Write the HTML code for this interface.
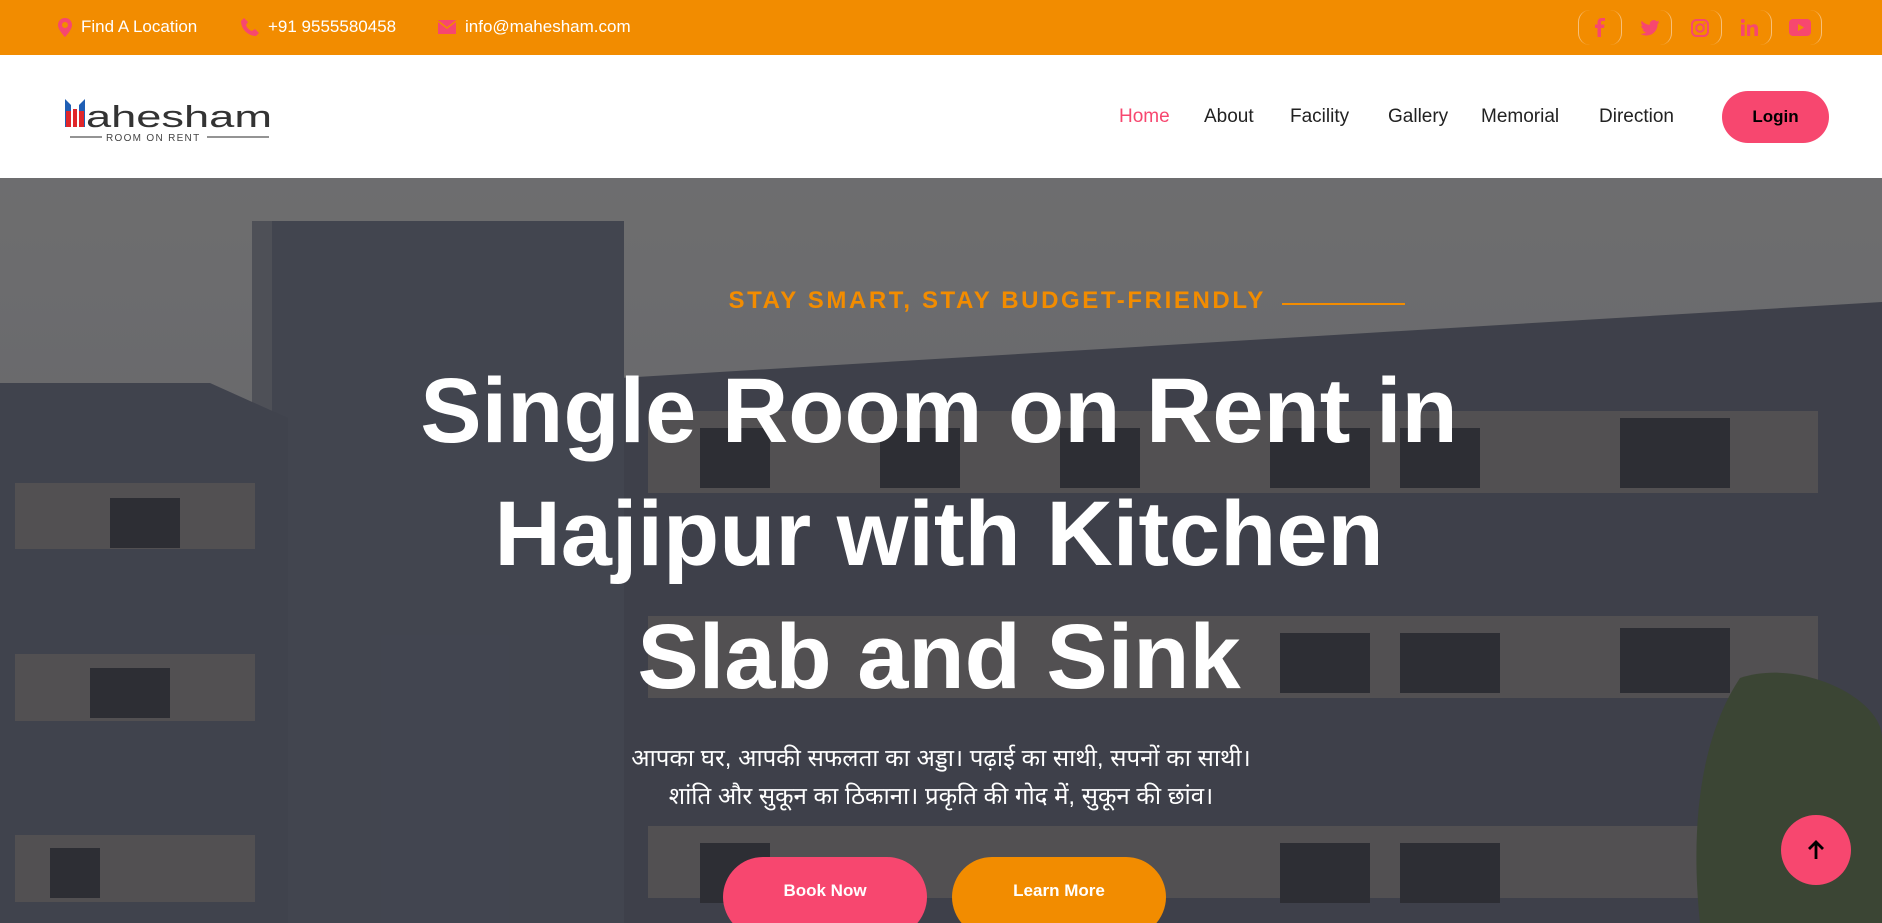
<!DOCTYPE html>
<html><head><meta charset="utf-8">
<style>
*{margin:0;padding:0;box-sizing:border-box}
html,body{width:1882px;height:923px;overflow:hidden}
body{font-family:"Liberation Sans",sans-serif;background:#fff}
#w{position:relative;width:1882px;height:923px;overflow:hidden}
.top{position:absolute;left:0;top:0;width:1882px;height:55px;background:#F28C00;color:#fff;font-size:17px}
.top .it{position:absolute;top:17px;display:flex;align-items:center;gap:9px}
.soc{position:absolute;top:10px;height:35px;width:44px;border-left:1px solid #f7c07a;border-right:1px solid #f7c07a;border-radius:12px;display:flex;align-items:center;justify-content:center}
.nav{position:absolute;left:0;top:55px;width:1882px;height:123px;background:#fff}
.nav a{position:absolute;top:51px;font-size:19px;color:#222;text-decoration:none}
.login{position:absolute;left:1722px;top:36px;width:107px;height:52px;border-radius:26px;background:#F7476F;color:#000;font-weight:bold;font-size:17px;display:flex;align-items:center;justify-content:center}
.hero{position:absolute;left:0;top:178px;width:1882px;height:745px;overflow:hidden}
.c{position:absolute;left:0;width:1882px;text-align:center;color:#fff}
.btn{position:absolute;top:857px;height:80px;border-radius:40px;color:#fff;font-weight:bold;font-size:17px;display:flex;align-items:center;justify-content:center;padding-bottom:12px}
</style></head><body><div id="w">
<div class="top">
 <div class="it" style="left:58px"><svg width="14" height="19" viewBox="0 0 14 19"><path d="M7 0C3 0 0 3 0 7c0 5 7 12 7 12s7-7 7-12c0-4-3-7-7-7zm0 10a3 3 0 110-6 3 3 0 010 6z" fill="#F7476F"/></svg>Find A Location</div>
 <div class="it" style="left:241px"><svg width="18" height="18" viewBox="0 0 18 18"><path d="M3 0l4 4-2 3c1 3 3 5 6 6l3-2 4 4-3 3C7 18 0 11 0 3z" fill="#F7476F"/></svg>+91 9555580458</div>
 <div class="it" style="left:438px"><svg width="18" height="14" viewBox="0 0 18 14"><rect width="18" height="14" fill="#F7476F"/><path d="M0 1l9 7 9-7" stroke="#F28C00" stroke-width="1.5" fill="none"/></svg>info@mahesham.com</div>
 <div class="soc" style="left:1578px"><svg width="10" height="19" viewBox="0 0 10 19"><path d="M6 19V10h3l.5-3.5H6V4.5C6 3.5 6.3 3 7.5 3H10V0H7C4 0 2.5 1.7 2.5 4.5V6.5H0V10h2.5v9z" fill="#F7476F"/></svg></div>
 <div class="soc" style="left:1628px;border-left:none"><svg width="20" height="16" viewBox="0 0 24 20"><path d="M24 2.4c-.9.4-1.8.6-2.8.8 1-.6 1.8-1.6 2.2-2.7-1 .6-2 1-3.1 1.2A4.9 4.9 0 0011.900 6C7.8 5.8 4.2 3.9 1.7.9c-1.4 2.3-.5 5.1 1.5 6.5-.8 0-1.6-.2-2.2-.6 0 2.4 1.7 4.4 3.9 4.9-.7.2-1.5.2-2.2.1.6 2 2.4 3.4 4.6 3.4A9.9 9.9 0 010 17.3 14 14 0 0021.5 4.9c1-.7 1.8-1.5 2.5-2.5z" fill="#F7476F"/></svg></div>
 <div class="soc" style="left:1678px;border-left:none"><svg width="18" height="18" viewBox="0 0 18 18"><rect x="1" y="1" width="16" height="16" rx="4.5" stroke="#F7476F" stroke-width="2" fill="none"/><circle cx="9" cy="9" r="3.8" stroke="#F7476F" stroke-width="2" fill="none"/><circle cx="13.5" cy="4.5" r="1" fill="#F7476F"/></svg></div>
 <div class="soc" style="left:1728px;border-left:none"><svg width="17" height="17" viewBox="0 0 17 17"><rect x="0" y="5.5" width="3.6" height="11.5" fill="#F7476F"/><circle cx="1.8" cy="2" r="2" fill="#F7476F"/><path d="M6 5.5h3.4v1.6c.6-1 1.9-1.9 3.7-1.9 3.3 0 3.900 2.2 3.900 5v6.8h-3.6v-6c0-1.4-.1-3-2-3s-2.2 1.4-2.2 2.9V17H6z" fill="#F7476F"/></svg></div>
 <div class="soc" style="left:1778px;border-left:none"><svg width="22" height="17" viewBox="0 0 22 17"><rect width="22" height="17" rx="4" fill="#F7476F"/><path d="M9 5v7l6-3.5z" fill="#F28C00"/></svg></div>
</div>
<div class="nav">
 <svg style="position:absolute;left:64px;top:36px" width="212" height="52" viewBox="0 0 212 52">
  <path d="M1 8l6 6v22H1z" fill="#1f5fb5"/><path d="M21 8l-6 6v22h6z" fill="#1f5fb5"/>
  <rect x="2" y="20" width="5" height="16" fill="#e0262a"/><rect x="9" y="18" width="4" height="18" fill="#e0262a"/><rect x="15" y="20" width="5" height="16" fill="#e0262a"/>
  <text x="22" y="36" font-family="Liberation Sans,sans-serif" font-size="31" fill="#333" textLength="186" lengthAdjust="spacingAndGlyphs">ahesham</text>
  <line x1="6" y1="46" x2="38" y2="46" stroke="#555" stroke-width="1.3"/>
  <text x="42" y="50" font-family="Liberation Sans,sans-serif" font-size="10" fill="#444" letter-spacing="1.3">ROOM ON RENT</text>
  <line x1="143" y1="46" x2="205" y2="46" stroke="#555" stroke-width="1.3"/>
 </svg>
 <a style="left:1119px;color:#F7476F">Home</a>
 <a style="left:1204px">About</a>
 <a style="left:1290px">Facility</a>
 <a style="left:1388px">Gallery</a>
 <a style="left:1481px">Memorial</a>
 <a style="left:1599px">Direction</a>
 <div class="login">Login</div>
</div>
<div class="hero">
 <svg width="1882" height="745" viewBox="0 0 1882 745" style="position:absolute;left:0;top:0">
  <defs><linearGradient id="sky" x1="0" y1="0" x2="0" y2="1"><stop offset="0" stop-color="#7a7a7b"/><stop offset="1" stop-color="#6a6b6e"/></linearGradient></defs>
  <rect width="1882" height="745" fill="url(#sky)"/>
  <path d="M620 200 L1882 124 L1882 745 L620 745z" fill="#42454f"/>
  <rect x="252" y="43" width="372" height="702" fill="#474a55"/>
  <rect x="252" y="43" width="20" height="702" fill="#55575f"/>
  <path d="M0 205 L210 205 L288 240 L288 745 L0 745z" fill="#454853"/>
  <g fill="#5a5859">
   <rect x="648" y="233" width="1170" height="82"/>
   <rect x="648" y="438" width="1170" height="82"/>
   <rect x="648" y="648" width="1170" height="72"/>
   <rect x="15" y="305" width="240" height="66"/>
   <rect x="15" y="476" width="240" height="67"/>
   <rect x="15" y="657" width="240" height="67"/>
  </g>
  <g fill="#2e2f35">
   <rect x="700" y="250" width="70" height="60"/><rect x="880" y="250" width="80" height="60"/><rect x="1060" y="250" width="80" height="60"/><rect x="1270" y="250" width="100" height="60"/><rect x="1400" y="250" width="80" height="60"/><rect x="1620" y="240" width="110" height="70"/>
   <rect x="1280" y="455" width="90" height="60"/><rect x="1400" y="455" width="100" height="60"/><rect x="1620" y="450" width="110" height="65"/>
   <rect x="700" y="665" width="70" height="60"/><rect x="1280" y="665" width="90" height="60"/><rect x="1400" y="665" width="100" height="60"/>
   <rect x="110" y="320" width="70" height="50"/><rect x="90" y="490" width="80" height="50"/><rect x="50" y="670" width="50" height="50"/>
  </g>
  <path d="M1740 500 C1800 480 1882 520 1882 560 L1882 745 L1700 745 C1690 650 1700 560 1740 500z" fill="#3f4a36"/>
  <rect width="1882" height="745" fill="rgba(40,42,50,0.15)"/>
 </svg>
 <div style="position:absolute;right:616px;top:109px;font-size:24px;color:#F28C00;font-weight:bold;letter-spacing:2.6px;white-space:nowrap">STAY SMART, STAY BUDGET-FRIENDLY</div>
 <div style="position:absolute;left:1282px;top:125px;width:123px;height:2px;background:#F28C00"></div>
 <div class="c" style="top:172px;font-size:92px;font-weight:bold;line-height:123px;left:-2px">Single Room on Rent in<br>Hajipur with Kitchen<br>Slab and Sink</div>
 <div class="c" style="top:562px;font-size:24px;line-height:38px;font-family:'Liberation Sans','Noto Sans CJK SC','DejaVu Sans',sans-serif;left:0">आपका घर, आपकी सफलता का अड्डा। पढ़ाई का साथी, सपनों का साथी।<br>शांति और सुकून का ठिकाना। प्रकृति की गोद में, सुकून की छांव।</div>
</div>
<div class="btn" style="left:723px;width:204px;background:#F7476F">Book Now</div>
<div class="btn" style="left:952px;width:214px;background:#F28C00">Learn More</div>
<div style="position:absolute;left:1781px;top:815px;width:70px;height:70px;border-radius:50%;background:#F7476F;display:flex;align-items:center;justify-content:center"><svg width="16" height="20" viewBox="0 0 16 20"><path d="M8 19V2M1 9l7-7 7 7" stroke="#000" stroke-width="2.8" fill="none"/></svg></div>
</div></body></html>
